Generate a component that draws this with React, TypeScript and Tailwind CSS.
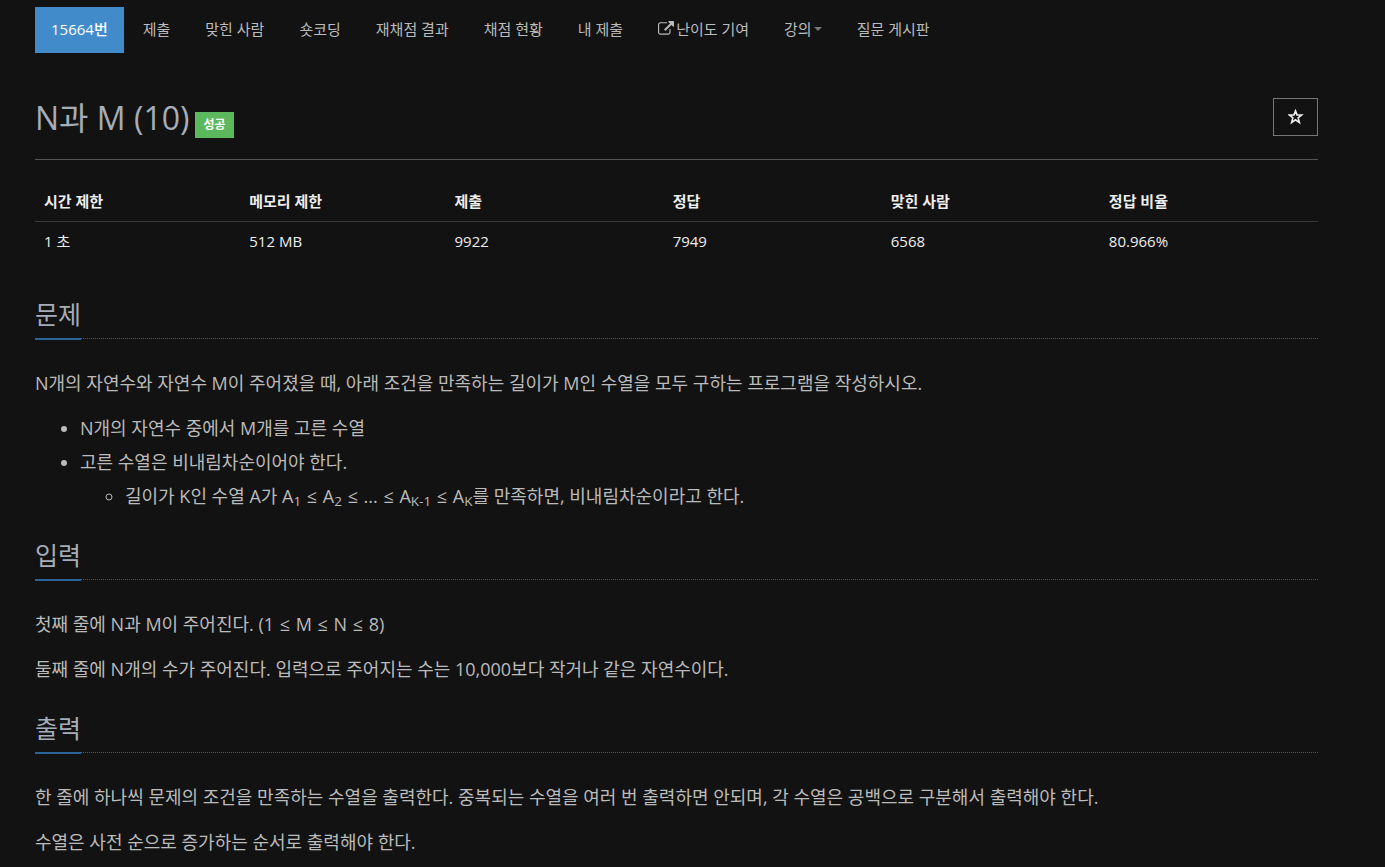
import React from 'react';

const limits = [
  { label: '시간 제한', value: '1 초', width: 'w-[16%]' },
  { label: '메모리 제한', value: '512 MB', width: 'w-[16%]' },
  { label: '제출', value: '9922', width: 'w-[17%]' },
  { label: '정답', value: '7949', width: 'w-[17%]' },
  { label: '맞힌 사람', value: '6568', width: 'w-[17%]' },
  { label: '정답 비율', value: '80.966%', width: 'w-[17%]' },
];

const ExternalLinkIcon: React.FC = () => (
  <svg viewBox="0 0 1792 1792" className="h-4 w-4 shrink-0 fill-current" aria-hidden="true">
    <path d="M1408 928v320q0 119-84.5 203.5t-203.5 84.5h-832q-119 0-203.5-84.5t-84.5-203.5v-832q0-119 84.5-203.5t203.5-84.5h704q14 0 23 9t9 23v64q0 14-9 23t-23 9h-704q-66 0-113 47t-47 113v832q0 66 47 113t113 47h832q66 0 113-47t47-113v-320q0-14 9-23t23-9h64q14 0 23 9t9 23zm384-864v512q0 26-19 45t-45 19-45-19l-176-176-652 652q-10 10-23 10t-23-10l-114-114q-10-10-10-23t10-23l652-652-176-176q-19-19-19-45t19-45 45-19h512q26 0 45 19t19 45z" />
  </svg>
);

const StarIcon: React.FC = () => (
  <svg viewBox="0 0 16 16" className="h-4 w-4" fill="none" stroke="currentColor" strokeWidth="1.6" aria-hidden="true">
    <path d="M7.5 1.9 L9 5.9 L13.6 6 L10.1 8.8 L11.4 13.6 L7.5 10.8 L3.6 13.6 L4.9 8.8 L1.4 6 L6 5.9 Z" />
  </svg>
);

const NavItem: React.FC<{ active?: boolean; children: React.ReactNode }> = ({ active, children }) => (
  <li>
    <a
      href="#"
      className={`flex h-[46px] items-center px-4 pb-0.5 text-[15px] ${
        active ? 'bg-[#428bca] font-medium text-white' : 'text-[#bbb]'
      }`}
    >
      {children}
    </a>
  </li>
);

const Section: React.FC<{ title: string; children: React.ReactNode }> = ({ title, children }) => (
  <section className="mb-[26px]">
    <div className="mb-[27px] flex border-b border-dotted border-[#555]">
      <h2 className="-mb-0.5 border-b-2 border-[#2a6496] pb-2 text-[25px] leading-8 text-[#a5adb8]">
        {title}
      </h2>
    </div>
    <div className="flex flex-col gap-[11px] text-lg leading-[34px] text-[#bbb]">{children}</div>
  </section>
);

const Le: React.FC = () => <span className="px-px">≤</span>;

function App() {
  return (
    <div className="min-h-screen bg-[#121212] pt-[7px] pr-[67px] pl-[35px] font-['Open_Sans','Noto_Sans_CJK_KR',sans-serif]">
      <nav>
        <ul className="flex flex-wrap gap-[3px]">
          <NavItem active>15664번</NavItem>
          <NavItem>제출</NavItem>
          <NavItem>맞힌 사람</NavItem>
          <NavItem>숏코딩</NavItem>
          <NavItem>재채점 결과</NavItem>
          <NavItem>채점 현황</NavItem>
          <NavItem>내 제출</NavItem>
          <NavItem>
            <span className="flex items-center gap-0.5">
              <ExternalLinkIcon />
              난이도 기여
            </span>
          </NavItem>
          <NavItem>
            강의
            <span className="ml-0.5 border-x-4 border-t-4 border-x-transparent border-t-[#777]" />
          </NavItem>
          <NavItem>질문 게시판</NavItem>
        </ul>
      </nav>

      <header className="mt-[45px] flex h-[62px] items-start justify-between border-b border-[#555]">
        <div className="flex items-end gap-1.5">
          <h1 className="text-[32px] leading-10 text-[#a5adb8]">N과 M (10)</h1>
          <span className="bg-[#5cb85c] px-2 text-xs leading-[26px] font-bold text-white">성공</span>
        </div>
        <button
          type="button"
          aria-label="즐겨찾기"
          className="flex h-[38px] w-[45px] items-center justify-center border border-[#777] text-[#eee]"
        >
          <StarIcon />
        </button>
      </header>

      <table className="mt-[21px] w-full table-fixed text-left text-[15px] leading-6 text-[#eee]">
        <thead>
          <tr className="border-b border-[#383838]">
            {limits.map(({ label, width }) => (
              <th key={label} className={`${width} px-[9px] py-2 font-bold`}>
                {label}
              </th>
            ))}
          </tr>
        </thead>
        <tbody>
          <tr>
            {limits.map(({ label, value }) => (
              <td key={label} className="px-[9px] pt-[7px] pb-[9px]">
                {value}
              </td>
            ))}
          </tr>
        </tbody>
      </table>

      <main className="mt-9">
        <Section title="문제">
          <p>N개의 자연수와 자연수 M이 주어졌을 때, 아래 조건을 만족하는 길이가 M인 수열을 모두 구하는 프로그램을 작성하시오.</p>
          <ul className="list-disc pl-[45px]">
            <li>N개의 자연수 중에서 M개를 고른 수열</li>
            <li>
              고른 수열은 비내림차순이어야 한다.
              <ul className="list-[circle] pl-[45px]">
                <li>
                  길이가 K인 수열 A가 A<sub>1</sub> <Le /> A<sub>2</sub> <Le /> ... <Le /> A<sub>K-1</sub> <Le /> A
                  <sub>K</sub>를 만족하면, 비내림차순이라고 한다.
                </li>
              </ul>
            </li>
          </ul>
        </Section>

        <Section title="입력">
          <p>
            첫째 줄에 N과 M이 주어진다. (1 <Le /> M <Le /> N <Le /> 8)
          </p>
          <p>둘째 줄에 N개의 수가 주어진다. 입력으로 주어지는 수는 10,000보다 작거나 같은 자연수이다.</p>
        </Section>

        <Section title="출력">
          <p>한 줄에 하나씩 문제의 조건을 만족하는 수열을 출력한다. 중복되는 수열을 여러 번 출력하면 안되며, 각 수열은 공백으로 구분해서 출력해야 한다.</p>
          <p>수열은 사전 순으로 증가하는 순서로 출력해야 한다.</p>
        </Section>
      </main>
    </div>
  );
}

export default App;
